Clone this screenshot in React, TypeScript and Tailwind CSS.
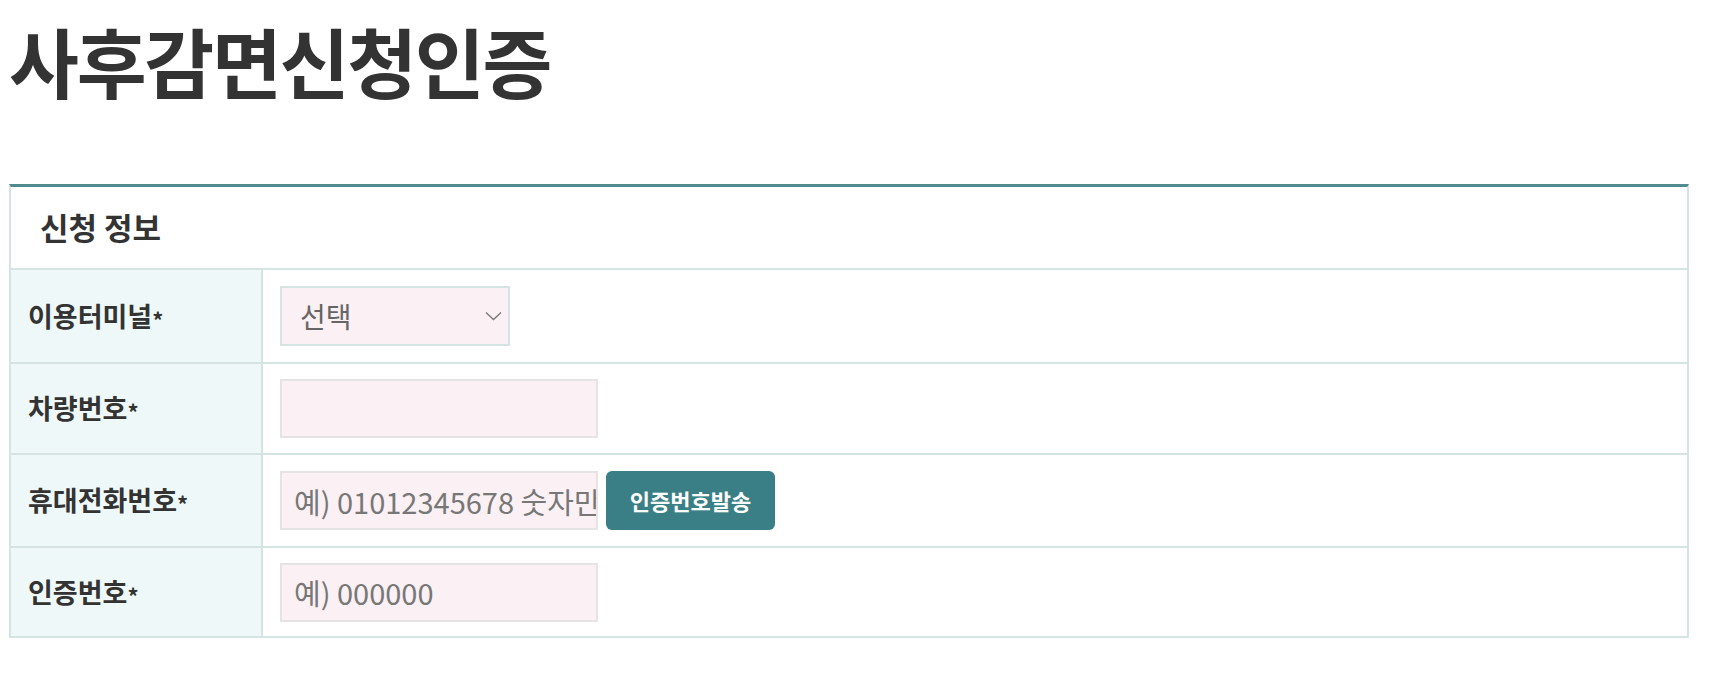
import React from "react";

const font = { fontFamily: '"Noto Sans CJK KR", "Noto Sans", sans-serif' };

function Label({ children }: { children: React.ReactNode }) {
  return (
    <div className="w-[252px] shrink-0 self-stretch flex items-center pl-[17px] bg-[#eff8f8] border-r-2 border-[#d6e3e3] text-[27px] font-bold text-[#333]">
      {children}
      <span className="text-[22px] relative top-[3px]">*</span>
    </div>
  );
}

function Row({ h, label, children }: { h: string; label: string; children: React.ReactNode }) {
  return (
    <div className={`flex border-t-2 border-[#d6e3e3] ${h}`}>
      <Label>{label}</Label>
      <div className="flex-1 flex items-center pl-[17px] gap-2">{children}</div>
    </div>
  );
}

function TextInput({ placeholder }: { placeholder?: string }) {
  return (
    <input
      type="text"
      placeholder={placeholder}
      className="w-[318px] h-[59px] bg-[#fbf0f4] border-2 border-[#e5e3e3] pl-[12px] text-[29px] text-[#555] placeholder:text-[#777] outline-none"
      style={font}
    />
  );
}

export default function App() {
  return (
    <div className="bg-white min-h-[674px] pl-[9px] pt-[14px]" style={font}>
      <h1 className="text-[76px] font-bold text-[#333] leading-none tracking-[-0.03em] h-[170px] pt-[8px]">
        사후감면신청인증
      </h1>
      <div className="w-[1680px] border-t-[3px] border-t-[#4f8b8f] border-x-2 border-b-2 border-x-[#d6e3e3] border-b-[#d6e3e3]">
        <div className="h-[81px] flex items-center pl-[29px] text-[31px] font-bold text-[#333]">
          신청 정보
        </div>
        <Row h="h-[94px]" label="이용터미널">
          <div className="relative w-[230px] h-[60px]">
            <select
              className="appearance-none w-full h-full bg-[#fbf0f4] border-2 border-[#d6e3e3] pl-[18px] text-[28px] text-[#666] outline-none"
              style={font}
              defaultValue=""
            >
              <option value="">선택</option>
            </select>
            <svg
              className="absolute right-[8px] top-[25px] pointer-events-none"
              width="17"
              height="10"
              viewBox="0 0 17 10"
              fill="none"
            >
              <path d="M1 1.5 L8.5 8.5 L16 1.5" stroke="#777" strokeWidth="1.3" />
            </svg>
          </div>
        </Row>
        <Row h="h-[91px]" label="차량번호">
          <TextInput />
        </Row>
        <Row h="h-[93px]" label="휴대전화번호">
          <TextInput placeholder="예) 01012345678 숫자만 입력" />
          <button
            className="w-[169px] h-[59px] rounded-[6px] bg-[#3b7f86] text-white text-[22px] font-bold"
            style={font}
          >
            인증번호발송
          </button>
        </Row>
        <Row h="h-[90px]" label="인증번호">
          <TextInput placeholder="예) 000000" />
        </Row>
      </div>
    </div>
  );
}
